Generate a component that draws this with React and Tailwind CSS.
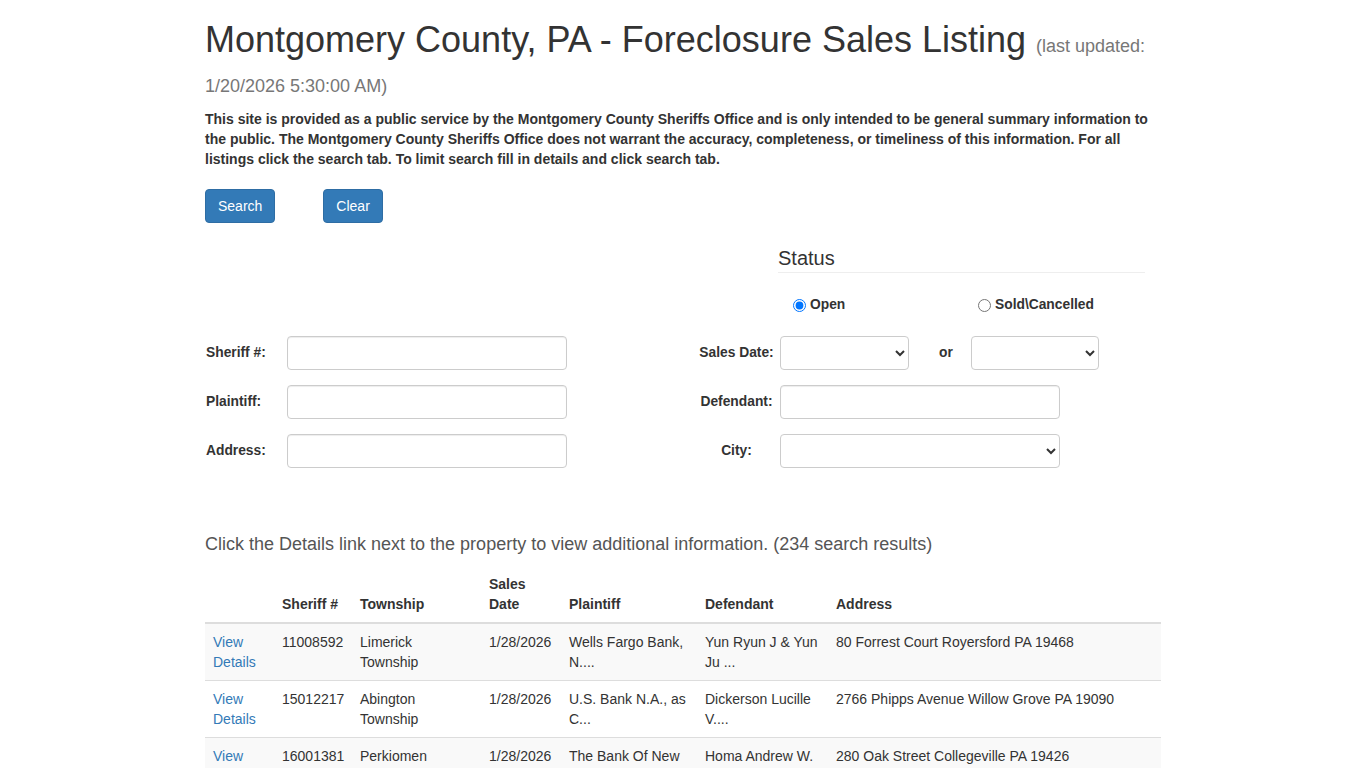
import React from "react";

const rows = [
  { id: "11008592", town: "Limerick Township", date: "1/28/2026", plaintiff: "Wells Fargo Bank, N....", defendant: "Yun Ryun J & Yun Ju ...", address: "80 Forrest Court Royersford PA 19468" },
  { id: "15012217", town: "Abington Township", date: "1/28/2026", plaintiff: "U.S. Bank N.A., as C...", defendant: "Dickerson Lucille V....", address: "2766 Phipps Avenue Willow Grove PA 19090" },
  { id: "16001381", town: "Perkiomen Township", date: "1/28/2026", plaintiff: "The Bank Of New York...", defendant: "Homa Andrew W.", address: "280 Oak Street Collegeville PA 19426" },
  { id: "17004410", town: "Upper Moreland Township", date: "1/28/2026", plaintiff: "Nationstar Mortgage ...", defendant: "Smith John R.", address: "412 Davisville Road Willow Grove PA 19090" },
];

function Field({ label, children, right }) {
  return (
    <div className="flex items-center h-[34px]">
      {right ? (
        <label className="w-[87px] ml-[10px] text-center font-bold text-[13.8px]">{label}</label>
      ) : (
        <label className="w-[82px] pl-[1px] font-bold text-[13.8px]">{label}</label>
      )}
      {children}
    </div>
  );
}

const inputCls = "h-[34px] w-[280px] border border-[#ccc] rounded-[4px] bg-white px-3 text-[14px] shadow-[inset_0_1px_1px_rgba(0,0,0,0.075)]";
const selectCls = "h-[34px] border border-[#ccc] rounded-[4px] bg-white px-2 text-[14px]";

export default function App() {
  return (
    <div className="min-h-screen bg-white text-[#333] text-[14px] leading-[20px] font-['Liberation_Sans',Arial,sans-serif]">
      <div className="w-[956px] mx-auto">
        <h1 className="pt-[20px] text-[36px] leading-[39.6px] font-normal">
          Montgomery County, PA - Foreclosure Sales Listing{" "}
          <span className="text-[18px] leading-none text-[#777]">(last updated: 1/20/2026 5:30:00 AM)</span>
        </h1>
        <p className="mt-[10px] font-bold text-[14px] leading-[20px]">
          This site is provided as a public service by the Montgomery County Sheriffs Office and is only intended to be general summary information to the public. The Montgomery County Sheriffs Office does not warrant the accuracy, completeness, or timeliness of this information. For all listings click the search tab. To limit search fill in details and click search tab.
        </p>

        <div className="mt-[20px] flex gap-[48px]">
          <button className="h-[34px] px-[12px] bg-[#337ab7] border border-[#2e6da4] rounded-[4px] text-white text-[14px]">Search</button>
          <button className="h-[34px] px-[12px] bg-[#337ab7] border border-[#2e6da4] rounded-[4px] text-white text-[14px]">Clear</button>
        </div>

        <div className="flex">
          <div className="w-[573px]" />
          <div className="w-[367px]">
            <h3 className="mt-[22px] text-[20px] leading-[26px] pb-[1px] border-b border-[#eee]">Status</h3>
            <div className="flex mt-[22px] text-[13.8px] font-bold h-[20px] items-center">
              <label className="flex items-center ml-[15px] w-[185px]">
                <input type="radio" name="status" defaultChecked className="w-[13px] h-[13px] m-0 mr-[4px] accent-[#0075ff]" />
                Open
              </label>
              <label className="flex items-center">
                <input type="radio" name="status" className="w-[13px] h-[13px] m-0 mr-[4px]" />
                Sold\Cancelled
              </label>
            </div>
          </div>
        </div>

        <div className="mt-[21px] flex">
          <div className="w-[478px] flex flex-col gap-[15px]">
            <Field label="Sheriff #:"><input className={inputCls} /></Field>
            <Field label="Plaintiff:"><input className={inputCls} /></Field>
            <Field label="Address:"><input className={inputCls} /></Field>
          </div>
          <div className="w-[478px] flex flex-col gap-[15px]">
            <Field right label="Sales Date:">
              <select className={selectCls + " w-[129px]"}><option></option></select>
              <span className="w-[62px] pl-[12px] text-center font-bold text-[13.8px]">or</span>
              <select className={selectCls + " w-[128px]"}><option></option></select>
            </Field>
            <Field right label="Defendant:"><input className={inputCls} /></Field>
            <Field right label="City:">
              <select className={selectCls + " w-[280px]"}><option></option></select>
            </Field>
          </div>
        </div>

        <p className="mt-[66px] text-[18px] leading-[20px] text-[#555]">
          Click the Details link next to the property to view additional information. (234 search results)
        </p>

        <table className="mt-[12px] w-full table-fixed border-collapse">
          <thead>
            <tr className="border-b-2 border-[#ddd] align-bottom">
              <th className="w-[69px] p-[8px] text-left"></th>
              <th className="w-[78px] p-[8px] text-left font-bold">Sheriff #</th>
              <th className="w-[129px] p-[8px] text-left font-bold">Township</th>
              <th className="w-[80px] p-[8px] text-left font-bold">Sales Date</th>
              <th className="w-[136px] p-[8px] text-left font-bold">Plaintiff</th>
              <th className="w-[131px] p-[8px] text-left font-bold">Defendant</th>
              <th className="w-[333px] p-[8px] text-left font-bold">Address</th>
            </tr>
          </thead>
          <tbody>
            {rows.map((r, i) => (
              <tr key={r.id} className={(i % 2 === 0 ? "bg-[#f9f9f9] " : "") + "border-t border-[#ddd] align-top"}>
                <td className="p-[8px]"><a href="#" className="text-[#337ab7]">View Details</a></td>
                <td className="p-[8px]">{r.id}</td>
                <td className="p-[8px]">{r.town}</td>
                <td className="p-[8px]">{r.date}</td>
                <td className="p-[8px]">{r.plaintiff}</td>
                <td className="p-[8px]">{r.defendant}</td>
                <td className="p-[8px]">{r.address}</td>
              </tr>
            ))}
          </tbody>
        </table>
      </div>
    </div>
  );
}
